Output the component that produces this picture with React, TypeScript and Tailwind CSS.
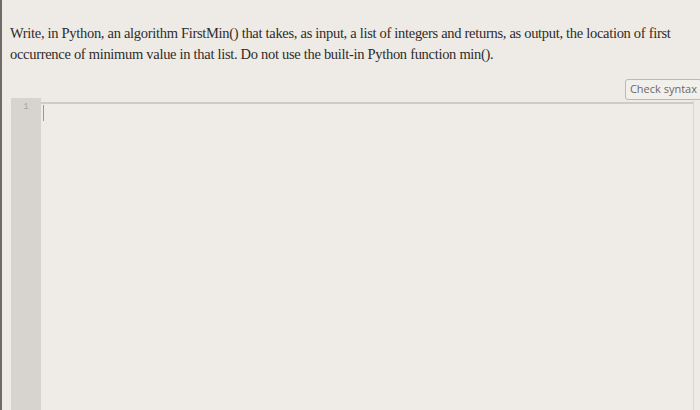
export default function App() {
  return (
    <div className="h-[410px] w-[700px] overflow-hidden bg-[#eeebe6] border-l-2 border-[#6f6c68] flex flex-col">
      <p
        className="pl-[8px] pr-2 pt-[23px] text-[14.5px] leading-[21px] tracking-[-0.3px] text-[#2e2c2a] whitespace-nowrap"
        style={{ fontFamily: '"Liberation Serif", serif' }}
      >
        Write, in Python, an algorithm FirstMin() that takes, as input, a list of integers and returns, as output, the location of first
        <br />
        occurrence of minimum value in that list. Do not use the built-in Python function min().
      </p>
      <div className="flex justify-end mt-[14px]">
        <button
          className="h-[21px] px-[4px] mr-[-2px] rounded-[3px] border border-[#bcb9b4] bg-[#f2f0ec] text-[11px] text-[#6b6966]"
          style={{ fontFamily: '"Open Sans", sans-serif' }}
        >
          Check syntax
        </button>
      </div>
      <div className="flex flex-1 mt-[-2px] ml-[9px] mr-[6px] border-r border-[#d9d6d1]">
        <div className="w-[30px] bg-[#d7d4cf] flex justify-center pt-[3px]">
          <span className="text-[9px] text-[#a9a6a1]" style={{ fontFamily: '"Liberation Mono", monospace' }}>1</span>
        </div>
        <div className="flex-1 border-t-2 border-[#cfccc7] mt-[4px] bg-[#efece8] relative">
          <div className="absolute left-[2px] top-[1px] w-px h-[16px] bg-[#9a9792]" />
        </div>
      </div>
    </div>
  );
}
